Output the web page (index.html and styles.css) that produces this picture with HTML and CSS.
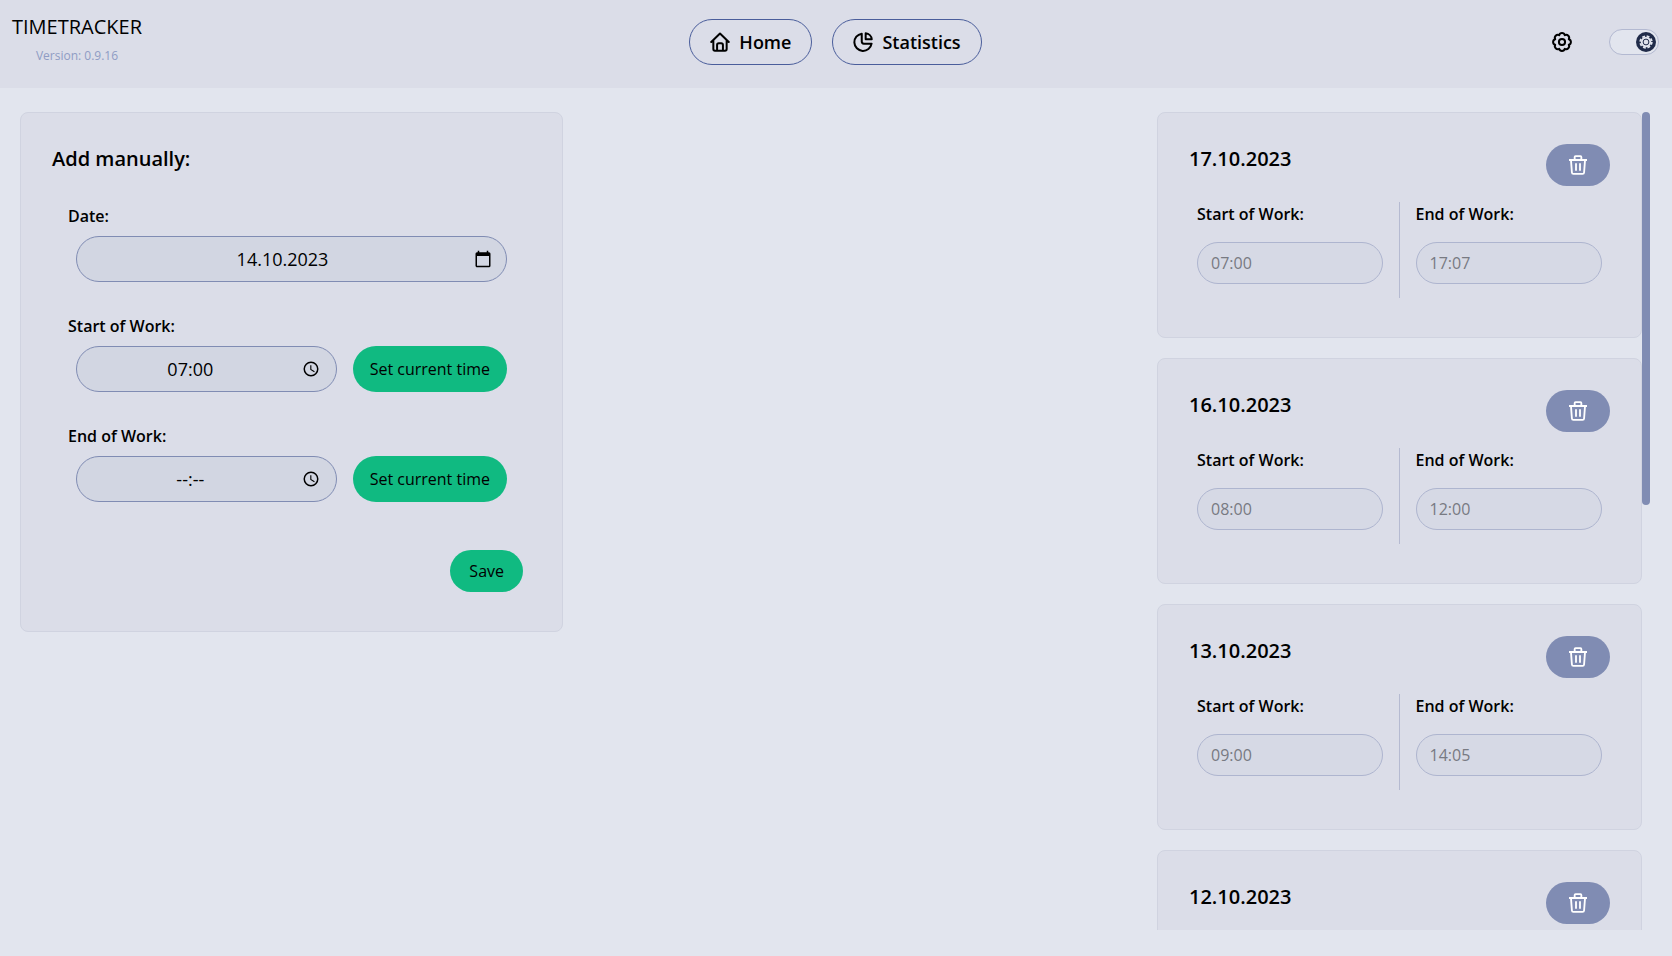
FILE: index.html
```html
<!DOCTYPE html>
<html lang="en">
<head>
<meta charset="utf-8">
<meta name="viewport" content="width=device-width, initial-scale=1">
<title>Timetracker</title>
<link rel="stylesheet" href="styles.css">
</head>
<body>
<svg class="sprite" aria-hidden="true">
  <symbol id="trash" viewBox="0 0 24 24"><g fill="none" stroke="currentColor" stroke-width="2.200" stroke-linejoin="round"><path d="M1.200 6H22.800M8 5.500V2.300a1 1 0 0 1 1-1h6a1 1 0 0 1 1 1V5.500M3.600 6.500 4.700 21a1.800 1.800 0 0 0 1.800 1.700h11a1.800 1.800 0 0 0 1.800-1.700L20.400 6.500M9.600 10v9M14.400 10v9"/></g></symbol>
  <symbol id="clock" viewBox="0 0 24 24"><path fill="currentColor" d="M12 2a10 10 0 1 0 0 20 10 10 0 0 0 0-20zm0 18a8 8 0 1 1 0-16 8 8 0 0 1 0 16zm.5-13H11v6l5.200 3.200.8-1.300-4.500-2.700z"/></symbol>
  <symbol id="gear" viewBox="0 0 24 24"><g fill="none" stroke="currentColor" stroke-width="2.400" stroke-linejoin="round"><path d="M8.630 3.870A3.500 3.500 0 0 1 15.370 3.870A3.500 3.500 0 0 1 20.130 8.630A3.500 3.500 0 0 1 20.130 15.370A3.500 3.500 0 0 1 15.370 20.130A3.500 3.500 0 0 1 8.630 20.130A3.500 3.500 0 0 1 3.870 15.370A3.500 3.500 0 0 1 3.870 8.630A3.500 3.500 0 0 1 8.630 3.870z"/><circle cx="12" cy="12" r="3.700"/></g></symbol>
</svg>
<header class="topbar">
  <div class="brand">
    <span class="brand-name">TIMETRACKER</span>
    <span class="brand-version">Version: 0.9.16</span>
  </div>
  <nav class="nav">
    <a class="nav-link" href="#home">
      <svg class="icon" viewBox="0 0 24 24" fill="none" stroke="currentColor" stroke-width="2.400" stroke-linejoin="round" stroke-linecap="round" aria-hidden="true"><path d="M1.500 12 12 1.800 22.500 12M4 10v10.500a2 2 0 0 0 2 2h12a2 2 0 0 0 2-2V10M8.500 22v-6.500a2 2 0 0 1 2-2h3a2 2 0 0 1 2 2V22"/></svg>
      Home</a>
    <a class="nav-link" href="#statistics">
      <svg class="icon" viewBox="0 0 24 24" fill="none" stroke="currentColor" stroke-width="2.400" stroke-linejoin="round" aria-hidden="true"><path d="M10.500 2A10.400 10.400 0 1 0 22.300 14H13a2.500 2.500 0 0 1-2.500-2.500zM15.200 1.500V8.800H22.500A8 8 0 0 0 15.200 1.500z"/></svg>
      Statistics</a>
  </nav>
  <div class="tools">
    <button class="icon-button" type="button" aria-label="Settings"><svg class="icon" aria-hidden="true"><use href="#gear"/></svg></button>
    <button class="toggle" type="button" role="switch" aria-checked="true" aria-label="Theme">
      <span class="knob"><svg viewBox="0 0 20 20" aria-hidden="true"><circle cx="10" cy="10" r="5.200" fill="currentColor"/><circle cx="10" cy="10" r="5.800" fill="none" stroke="currentColor" stroke-width="1.800" stroke-dasharray="2.800 1.755"/><circle class="knob-hole" cx="10" cy="10" r="2.900"/></svg></span>
    </button>
  </div>
</header>
<main class="content">
  <section class="card entry-card">
    <h2 class="card-title">Add manually:</h2>
    <form class="entry-form">
      <div class="field">
        <label class="label" for="date">Date:</label>
        <div class="field-row">
          <div class="picker">
            <input class="picker-input" id="date" type="text" value="14.10.2023">
            <button class="picker-button" type="button" aria-label="Choose date"><svg viewBox="0 0 24 24" aria-hidden="true"><path fill="currentColor" d="M20 3h-1V1h-2v2H7V1H5v2H4a2 2 0 0 0-2 2v16c0 1.100.9 2 2 2h16a2 2 0 0 0 2-2V5a2 2 0 0 0-2-2zm0 18H4V8h16z"/></svg></button>
          </div>
        </div>
      </div>
      <div class="field">
        <label class="label" for="start">Start of Work:</label>
        <div class="field-row">
          <div class="picker picker-time">
            <input class="picker-input" id="start" type="text" value="07:00">
            <button class="picker-button" type="button" aria-label="Choose start time"><svg aria-hidden="true"><use href="#clock"/></svg></button>
          </div>
          <button class="button set-time" type="button">Set current time</button>
        </div>
      </div>
      <div class="field">
        <label class="label" for="end">End of Work:</label>
        <div class="field-row">
          <div class="picker picker-time">
            <input class="picker-input" id="end" type="text" value="--:--">
            <button class="picker-button" type="button" aria-label="Choose end time"><svg aria-hidden="true"><use href="#clock"/></svg></button>
          </div>
          <button class="button set-time" type="button">Set current time</button>
        </div>
      </div>
    </form>
    <div class="actions"><button class="button save" type="button">Save</button></div>
  </section>
  <section class="history">
    <div class="day-list">
      <article class="card day">
        <div class="day-head"><h2 class="card-title">17.10.2023</h2><button class="delete" type="button" aria-label="Delete"><svg class="icon" aria-hidden="true"><use href="#trash"/></svg></button></div>
        <div class="times">
          <div class="time"><label class="label" for="s1">Start of Work:</label><input class="time-input" id="s1" value="07:00" disabled></div>
          <div class="time"><label class="label" for="e1">End of Work:</label><input class="time-input" id="e1" value="17:07" disabled></div>
        </div>
      </article>
      <article class="card day">
        <div class="day-head"><h2 class="card-title">16.10.2023</h2><button class="delete" type="button" aria-label="Delete"><svg class="icon" aria-hidden="true"><use href="#trash"/></svg></button></div>
        <div class="times">
          <div class="time"><label class="label" for="s2">Start of Work:</label><input class="time-input" id="s2" value="08:00" disabled></div>
          <div class="time"><label class="label" for="e2">End of Work:</label><input class="time-input" id="e2" value="12:00" disabled></div>
        </div>
      </article>
      <article class="card day">
        <div class="day-head"><h2 class="card-title">13.10.2023</h2><button class="delete" type="button" aria-label="Delete"><svg class="icon" aria-hidden="true"><use href="#trash"/></svg></button></div>
        <div class="times">
          <div class="time"><label class="label" for="s3">Start of Work:</label><input class="time-input" id="s3" value="09:00" disabled></div>
          <div class="time"><label class="label" for="e3">End of Work:</label><input class="time-input" id="e3" value="14:05" disabled></div>
        </div>
      </article>
      <article class="card day">
        <div class="day-head"><h2 class="card-title">12.10.2023</h2><button class="delete" type="button" aria-label="Delete"><svg class="icon" aria-hidden="true"><use href="#trash"/></svg></button></div>
      </article>
    </div>
    <div class="scrollbar" aria-hidden="true"><div class="thumb"></div></div>
  </section>
</main>
</body>
</html>
```
FILE: styles.css
```css
:root {
  --page: #e2e5ee;
  --surface: #dbdde8;
  --line: #d0d3e0;
  --field: #d2d6e2;
  --accent: #808cb3;
  --green: #10ba81;
}
* { box-sizing: border-box; }
body {
  margin: 0;
  height: 100vh;
  display: flex;
  flex-direction: column;
  overflow: hidden;
  background: var(--page);
  color: #000;
  font: 16px/24px "Open Sans", "Noto Sans", sans-serif;
}
button, input { font: inherit; color: inherit; margin: 0; }
button { border: 0; padding: 0; background: none; cursor: pointer; }
.sprite { display: none; }
.icon { display: block; width: 20px; height: 20px; flex: none; }

.topbar {
  flex: none;
  display: grid;
  grid-template-columns: 1fr auto 1fr;
  align-items: start;
  padding: 12px 13px 0 12px;
  height: 88px;
  background: var(--surface);
}
.brand {
  justify-self: start;
  display: flex;
  flex-direction: column;
  align-items: center;
}
.brand-name { font-size: 20px; line-height: 30px; }
.brand-version { font-size: 12px; line-height: 28px; color: #8f9cc4; }
.nav { display: flex; gap: 20px; padding-top: 7px; }
.nav-link {
  display: flex;
  align-items: center;
  gap: 9px;
  height: 46px;
  padding: 0 20px;
  border: 1px solid #4a5d9b;
  border-radius: 23px;
  color: inherit;
  font-size: 18px;
  font-weight: 600;
  text-decoration: none;
}
.tools {
  justify-self: end;
  display: flex;
  align-items: center;
  gap: 37px;
  padding-top: 17px;
}
.toggle {
  display: flex;
  align-items: center;
  justify-content: flex-end;
  width: 50px;
  height: 26px;
  padding: 0 2px;
  border: 1px solid #b3b9d1;
  border-radius: 13px;
  background: var(--page);
}
.knob { width: 20px; height: 20px; border-radius: 50%; background: #202b49; color: var(--page); }
.knob svg { display: block; width: 20px; height: 20px; }
.knob-hole { fill: #dfe2ec; stroke: #202b49; stroke-width: 1; }

.content {
  flex: 1;
  min-height: 0;
  display: flex;
  align-items: flex-start;
  justify-content: space-between;
  padding: 24px 22px 26px 20px;
}
.card {
  border: 1px solid var(--line);
  border-radius: 8px;
  background: var(--surface);
}
.card-title { margin: 0; font-size: 20px; font-weight: 600; line-height: 30px; }
.label { display: block; font-weight: 600; }

.entry-card { width: 543px; padding: 31px 39px 39px 31px; }
.entry-form {
  display: flex;
  flex-direction: column;
  gap: 32px;
  padding: 30px 16px 0;
}
.field-row { display: flex; gap: 16px; padding-left: 8px; margin-top: 8px; }
.picker {
  flex: 1;
  min-width: 0;
  display: flex;
  align-items: center;
  height: 46px;
  padding: 0 14px;
  border: 1px solid var(--accent);
  border-radius: 23px;
  background: var(--field);
}
.picker-time { gap: 12px; padding-right: 16px; }
.picker-input {
  flex: 1;
  min-width: 0;
  padding: 0;
  border: 0;
  background: none;
  font-size: 18px;
  text-align: center;
}
.picker-button svg { display: block; width: 18px; height: 18px; }
.button {
  height: 46px;
  padding: 0 19px;
  border-radius: 23px;
  background: var(--green);
}
.set-time { padding: 0 17px; }
.actions { display: flex; justify-content: flex-end; padding-top: 48px; }
.save { height: 42px; }

.history { align-self: stretch; display: flex; width: 493px; min-height: 0; }
.day-list {
  flex: 1;
  display: flex;
  flex-direction: column;
  gap: 20px;
  overflow: hidden;
}
.day { flex: none; min-height: 226px; padding: 31px 31px 39px; }
.day-head { display: flex; justify-content: space-between; align-items: flex-start; }
.delete {
  display: flex;
  align-items: center;
  justify-content: center;
  width: 64px;
  height: 42px;
  border-radius: 21px;
  background: var(--accent);
  color: #fff;
}
.times { display: grid; grid-template-columns: 1fr 1fr; padding-top: 16px; }
.time { height: 96px; padding: 0 8px 0 16px; }
.time:first-child { padding: 0 16px 0 8px; border-right: 1px solid #b5bad1; }
.time-input {
  display: block;
  width: 100%;
  height: 42px;
  margin-top: 16px;
  padding: 0 13px;
  border: 1px solid #aeb5cf;
  border-radius: 21px;
  background: #d6d9e5;
  color: #787a82;
}
.scrollbar { width: 8px; }
.thumb { height: 48%; border-radius: 4px; background: var(--accent); }
```
